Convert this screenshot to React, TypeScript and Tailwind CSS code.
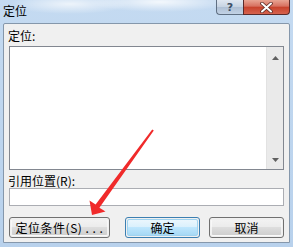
import React from "react";

const font = { fontFamily: '"Noto Sans CJK SC", "Noto Sans", sans-serif' };

function Btn({ children, w, primary }: { children: React.ReactNode; w: string; primary?: boolean }) {
  return (
    <div
      className={`${w} h-[21px] rounded-[3px] border ${
        primary ? "border-[#3c7fb1]" : "border-[#707070]"
      } p-px`}
    >
      <div
        className={`h-full w-full rounded-[2px] flex items-center justify-center text-[12px] leading-none text-black ${
          primary
            ? "bg-[linear-gradient(#eaf6fd_0%,#d9f0fc_50%,#bee6fd_50%,#a7d9f5_100%)] border border-[#9fd3f0]"
            : "bg-[linear-gradient(#f2f2f2_0%,#ebebeb_50%,#dddddd_50%,#cfcfcf_100%)] border border-[#fcfcfc]/70"
        }`}
      >
        {children}
      </div>
    </div>
  );
}

export default function App() {
  return (
    <div
      className="relative w-[293px] h-[247px] overflow-hidden flex flex-col px-[3px] pb-[4px] bg-[radial-gradient(ellipse_60px_10px_at_70px_4px,rgba(255,255,255,0.7),transparent),radial-gradient(ellipse_70px_10px_at_160px_2px,rgba(255,255,255,0.8),transparent),linear-gradient(#c4daf1,#b8d1ec)]"
      style={font}
    >
      {/* Title bar */}
      <div className="h-[23px] flex items-start justify-between -mx-[3px] shrink-0">
        <div className="pl-[3px] pt-[4px] text-[12px] leading-[14px] text-black">定位</div>
        <div className="flex mr-[3px]">
          <div className="w-[27px] h-[15px] rounded-bl-[4px] border border-[#5f6f82] border-t-0 border-r-0 bg-[linear-gradient(#dfe7f1_0%,#c6d3e2_50%,#aebfd4_50%,#c2d2e5_100%)] flex items-center justify-center">
            <span className="text-[11px] font-bold leading-none text-[#3d4f66]" style={{ fontFamily: '"DejaVu Sans", sans-serif' }}>?</span>
          </div>
          <div className="w-[47px] h-[15px] rounded-br-[4px] border border-[#5a2a2a] border-t-0 bg-[linear-gradient(#e8a493_0%,#d7705f_45%,#c7412b_50%,#d6634f_100%)] flex items-center justify-center">
            <svg width="13" height="11" viewBox="0 0 13 11">
              <path d="M2 1.5 L11 9.5 M11 1.5 L2 9.5" stroke="#5b2a25" strokeWidth="3.6" strokeLinecap="round" />
              <path d="M2 1.5 L11 9.5 M11 1.5 L2 9.5" stroke="#ffffff" strokeWidth="2" strokeLinecap="round" />
            </svg>
          </div>
        </div>
      </div>

      {/* Client area */}
      <div className="flex-1 border border-[#8597ab] rounded-t-[2px] bg-[#f0f0f0] flex flex-col pl-[5px] pr-[5px] pt-[4px]">
        <div className="h-[16px] text-[12px] leading-[16px] text-black -ml-px">定位:</div>
        <div className="mt-[2px] h-[124px] border border-[#828790] bg-white flex justify-end">
          <div className="w-[17px] h-full bg-[#eaeaea] border-l border-[#e2e2e2] flex flex-col items-center justify-between pt-[9px] pb-[7px]">
            <svg width="7" height="4" viewBox="0 0 7 4"><path d="M0 4 L3.5 0 L7 4 Z" fill="#606060" /></svg>
            <svg width="7" height="4" viewBox="0 0 7 4"><path d="M0 0 L3.5 4 L7 0 Z" fill="#606060" /></svg>
          </div>
        </div>
        <div className="mt-[3px] h-[15px] text-[12px] leading-[15px] text-black -ml-px">引用位置(R):</div>
        <div className="h-[18px] border border-[#abadb3] bg-white"></div>
        <div className="mt-[11px] flex">
          <Btn w="w-[101px]">
            <span className="tracking-[0.5px]">定位条件(S)&nbsp;.&nbsp;.&nbsp;.</span>
          </Btn>
          <div className="ml-[15px]">
            <Btn w="w-[75px]" primary>确定</Btn>
          </div>
          <div className="ml-[9px]">
            <Btn w="w-[75px]">取消</Btn>
          </div>
        </div>
      </div>

      {/* Red arrow annotation */}
      <svg className="absolute left-0 top-0 pointer-events-none" width="293" height="247" viewBox="0 0 293 247">
        <polygon
          points="92,215 89.5,200.5 95.6,204.6 152.2,129.4 153.8,130.6 99.4,207.8 105.5,211.5"
          fill="#f02a2a"
        />
      </svg>
    </div>
  );
}
